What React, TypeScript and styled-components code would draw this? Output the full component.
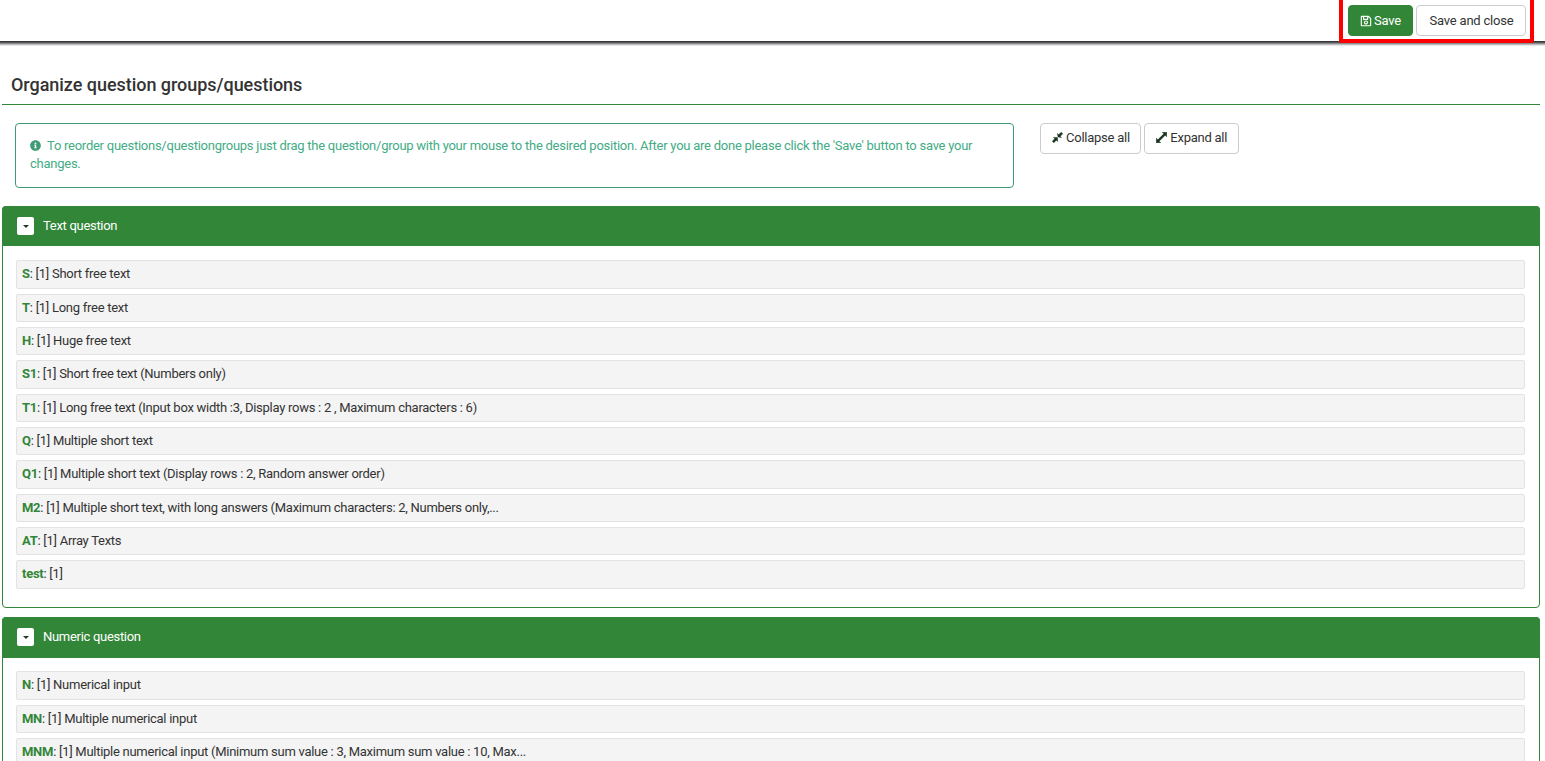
import React from "react";
import styled, { createGlobalStyle } from "styled-components";
import { FaRegSave, FaInfoCircle } from "react-icons/fa";

const Global = createGlobalStyle`
  html, body { margin: 0; padding: 0; height: 761px; overflow: hidden; background: #fff; }
  body { font-family: Roboto, "Liberation Sans", sans-serif; font-size: 13px; line-height: 18.57px; letter-spacing: -0.27px; color: #333; }
  * { box-sizing: border-box; }
`;

const Page = styled.div`
  position: relative;
  height: 761px;
  overflow: hidden;
`;
const TopBar = styled.header`
  height: 41px;
  display: flex;
  justify-content: flex-end;
  align-items: flex-start;
  gap: 3px;
  padding: 5px 19px 0 0;
  box-shadow: 0 1px 0 #3a3a3e, 0 2px 0 #55555a, 0 3px 0 #8c8c8c, 0 4px 0 #bdbdbd, 0 5px 0 #e6e6e6;
`;
const Button = styled.button<{ $primary?: boolean }>`
  height: 31px;
  display: inline-flex;
  align-items: center;
  justify-content: center;
  gap: 2px;
  padding: 0 0 0 ${(p) => (p.$primary ? "0" : "1px")};
  width: ${(p) => (p.$primary ? "65px" : "110px")};
  border-radius: 4px;
  border: 1px solid ${(p) => (p.$primary ? "#328637" : "#ccc")};
  background: ${(p) => (p.$primary ? "#328637" : "#fff")};
  color: ${(p) => (p.$primary ? "#fff" : "#333")};
  font: 13px Roboto, sans-serif;
  letter-spacing: -0.2px;
`;
const Highlight = styled.div`
  position: absolute;
  left: 1339px;
  top: -4px;
  width: 195px;
  height: 47px;
  border: 4px solid #fe0000;
  border-radius: 2px;
`;
const Title = styled.h1`
  margin: 33px 5px 0 2px;
  height: 31px;
  padding: 0 0 0 9px;
  font-size: 18px;
  font-weight: 500;
  line-height: 22px;
  letter-spacing: -0.04px;
  color: #333;
  border-bottom: 1px solid #328637;
`;
const InfoRow = styled.section`
  display: flex;
  align-items: flex-start;
  margin: 18px 0 17.7px 15px;
  gap: 26px;
`;
const Note = styled.div`
  width: 999px;
  height: 65px;
  border: 1px solid #3d9c73;
  border-radius: 4px;
  padding: 12.5px 14px;
  color: #43ac85;
  letter-spacing: -0.25px;
`;
const NoteIcon = styled(FaInfoCircle)`
  width: 11px;
  height: 11px;
  margin-right: 6px;
  vertical-align: -1px;
  color: #3d9c73;
`;
const Tools = styled.div`
  display: flex;
  gap: 3px;
`;
const ToolButton = styled.button`
  height: 31px;
  display: inline-flex;
  align-items: center;
  gap: 3px;
  padding: 0 10.5px 2px 11px;
  background: #fff;
  border: 1px solid #ccc;
  border-radius: 4px;
  color: #333;
  font: 13px Roboto, sans-serif;
  letter-spacing: -0.25px;
`;
const ToolIcon = styled.svg`
  width: 11px;
  height: 11px;
  fill: #17331f;
  stroke: #17331f;
  stroke-width: 0.5;
`;
const Panel = styled.section`
  margin: 0 5px 8.76px 2px;
  border: 1px solid #328637;
  border-radius: 4px;
  padding-bottom: 18.5px;
`;
const PanelHead = styled.div`
  height: 40.75px;
  margin: -1px -1px 13.82px;
  display: flex;
  align-items: center;
  gap: 9px;
  padding: 0 0 0 15px;
  background: #328637;
  color: #fff;
  letter-spacing: -0.3px;
  border-radius: 4px 4px 0 0;
`;
const Toggle = styled.span`
  width: 17px;
  height: 18px;
  display: flex;
  align-items: center;
  justify-content: center;
  background: #fff;
  border-radius: 2px;
  &::after {
    content: "";
    border-top: 3px solid #1f3a26;
    border-left: 3px solid transparent;
    border-right: 3px solid transparent;
  }
`;
const Row = styled.div`
  height: 28.33px;
  margin: 0 14px 5px 13px;
  padding: 4px 5px;
  background: #f4f4f4;
  border: 1px solid #e3e3e3;
  border-radius: 2px;
  color: #333;
  white-space: nowrap;
  &:last-child { margin-bottom: 0; }
`;
const Code = styled.b`
  font-weight: 700;
  color: #328637;
`;

const groups: { name: string; rows: [string, string][] }[] = [
  {
    name: "Text question",
    rows: [
      ["S", "[1] Short free text"],
      ["T", "[1] Long free text"],
      ["H", "[1] Huge free text"],
      ["S1", "[1] Short free text (Numbers only)"],
      ["T1", "[1] Long free text (Input box width :3, Display rows : 2 , Maximum characters : 6)"],
      ["Q", "[1] Multiple short text"],
      ["Q1", "[1] Multiple short text (Display rows : 2, Random answer order)"],
      ["M2", "[1] Multiple short text, with long answers (Maximum characters: 2, Numbers only,..."],
      ["AT", "[1] Array Texts"],
      ["test", "[1]"],
    ],
  },
  {
    name: "Numeric question",
    rows: [
      ["N", "[1] Numerical input"],
      ["MN", "[1] Multiple numerical input"],
      ["MNM", "[1] Multiple numerical input (Minimum sum value : 3, Maximum sum value : 10, Max..."],
    ],
  },
];

export default function App() {
  return (
    <Page>
      <Global />
      <TopBar>
        <Button $primary>
          <FaRegSave size={12} />
          Save
        </Button>
        <Button>Save and close</Button>
      </TopBar>
      <Highlight />
      <Title>Organize question groups/questions</Title>
      <InfoRow>
        <Note>
          <NoteIcon />
          To reorder questions/questiongroups just drag the question/group with your mouse to the desired position. After you are done please click the 'Save' button to save your changes.
        </Note>
        <Tools>
          <ToolButton>
            <ToolIcon viewBox="0 0 12 12">
              <path d="M0.3 10 3 7.3 1.6 5.9 6 6 6.1 10.4 4.7 9 2 11.7ZM11.7 2 9 4.7 10.4 6.1 6.6 5.4 5.9 1.6 7.3 3 10 0.3Z" />
            </ToolIcon>
            Collapse all
          </ToolButton>
          <ToolButton>
            <ToolIcon viewBox="0 0 12 12">
              <path d="M6.8 0.3H11.7V5.2L10 3.5 3.5 10 5.2 11.7H0.3V6.8L2 8.5 8.5 2Z" />
            </ToolIcon>
            Expand all
          </ToolButton>
        </Tools>
      </InfoRow>
      {groups.map((g) => (
        <Panel key={g.name}>
          <PanelHead>
            <Toggle />
            {g.name}
          </PanelHead>
          {g.rows.map(([code, text]) => (
            <Row key={code}>
              <Code>{code}</Code>: {text}
            </Row>
          ))}
        </Panel>
      ))}
    </Page>
  );
}
